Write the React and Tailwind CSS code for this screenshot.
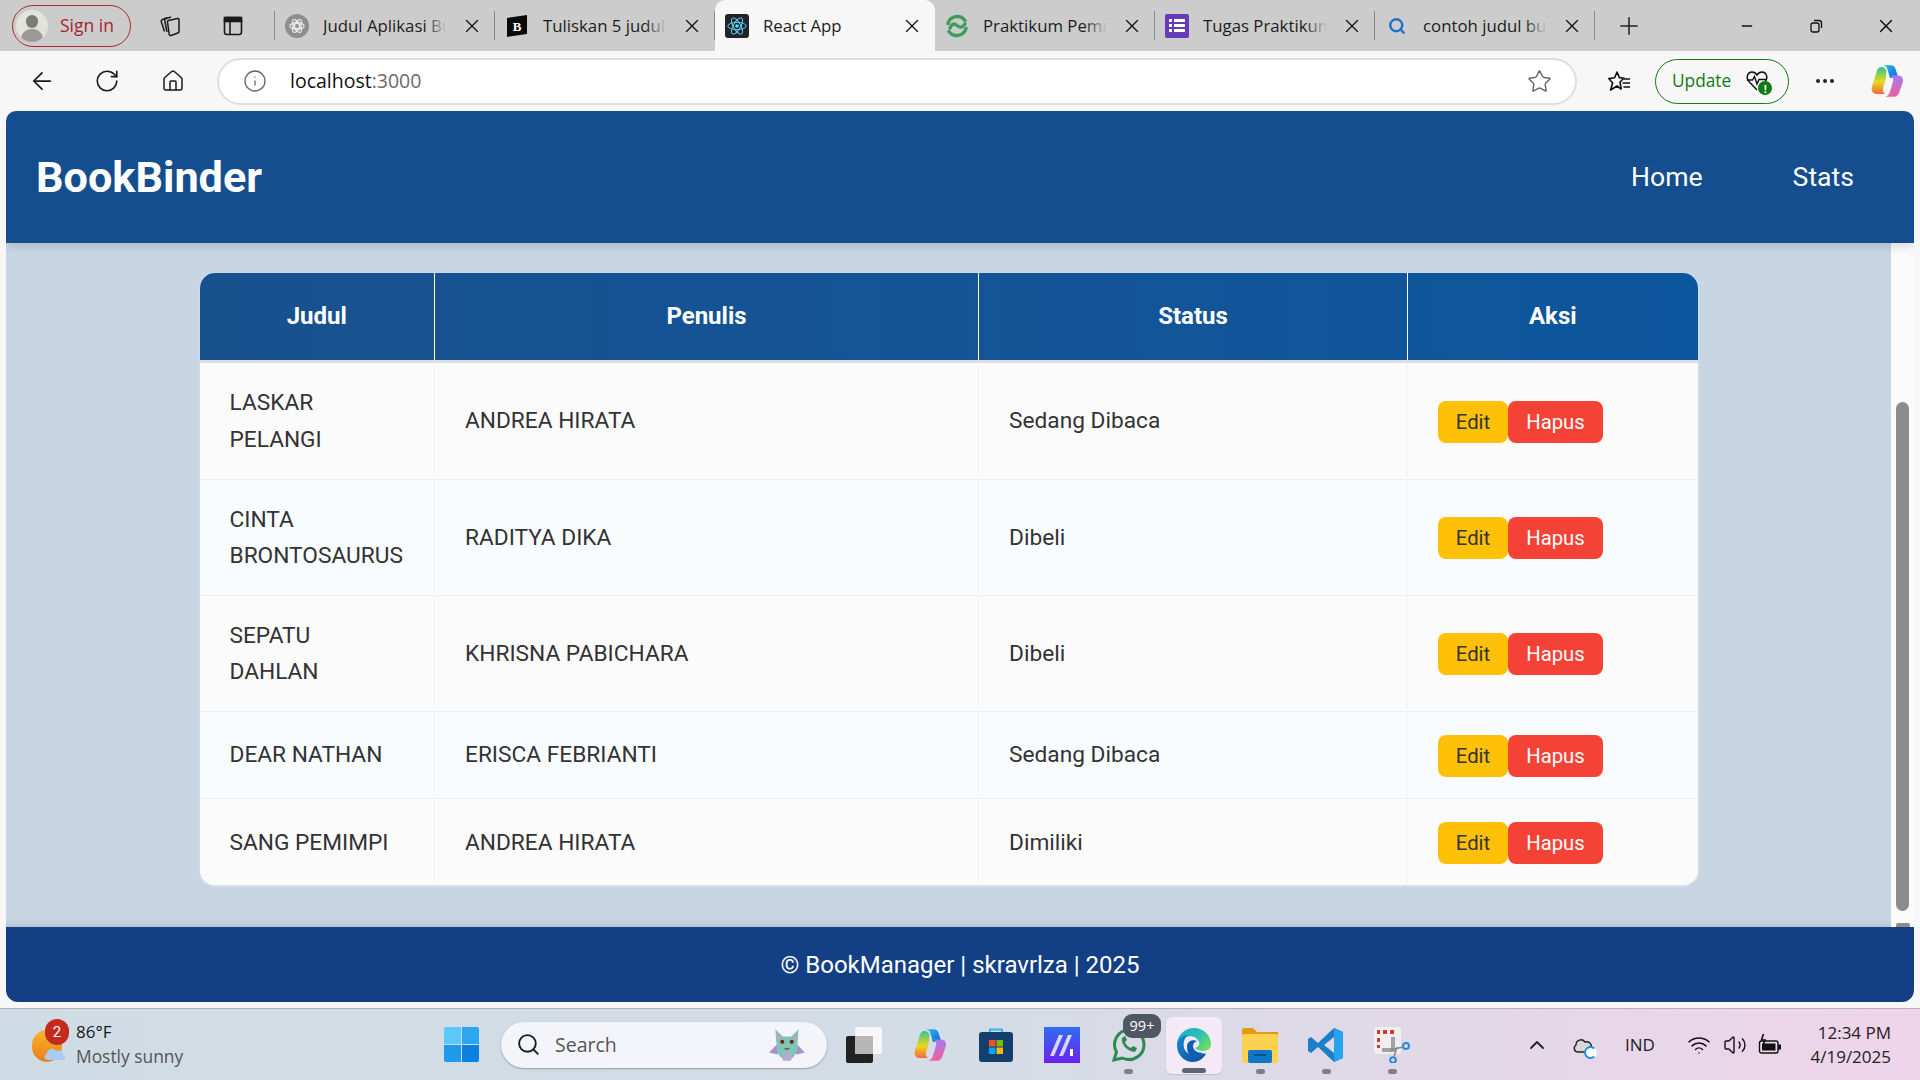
import React from 'react';
import { ArrowLeft, RotateCw, Home, Info, Star, X, Plus, Minus, Search, ChevronUp, Wifi, Volume2, MoreHorizontal } from 'lucide-react';

const books = [
  { judul: 'LASKAR PELANGI', penulis: 'ANDREA HIRATA', status: 'Sedang Dibaca', rowCls: 'h-[118px]' },
  { judul: 'CINTA BRONTOSAURUS', penulis: 'RADITYA DIKA', status: 'Dibeli', rowCls: 'h-[116px]' },
  { judul: 'SEPATU DAHLAN', penulis: 'KHRISNA PABICHARA', status: 'Dibeli', rowCls: 'h-[116px]' },
  { judul: 'DEAR NATHAN', penulis: 'ERISCA FEBRIANTI', status: 'Sedang Dibaca', rowCls: 'h-[87px]' },
  { judul: 'SANG PEMIMPI', penulis: 'ANDREA HIRATA', status: 'Dimiliki', rowCls: 'h-[87px]' },
];

const ReactIcon = () => (
  <div className="w-6 h-6 rounded-[3px] bg-[#20232a] flex items-center justify-center">
    <svg viewBox="-12 -12 24 24" className="w-[22px] h-[22px]" fill="none" stroke="#61dafb" strokeWidth="1">
      <ellipse rx="10" ry="4" />
      <ellipse rx="10" ry="4" transform="rotate(60)" />
      <ellipse rx="10" ry="4" transform="rotate(120)" />
      <circle r="2" fill="#61dafb" stroke="none" />
    </svg>
  </div>
);

const GptIcon = () => (
  <div className="w-6 h-6 rounded-full bg-[#8e8e8e] flex items-center justify-center">
    <svg viewBox="0 0 24 24" className="w-[18px] h-[18px]" fill="none" stroke="#e8e8e8" strokeWidth="1.6">
      <circle cx="12" cy="12" r="3.5" />
      <ellipse cx="12" cy="12" rx="9.5" ry="4.5" />
      <ellipse cx="12" cy="12" rx="9.5" ry="4.5" transform="rotate(60 12 12)" />
      <ellipse cx="12" cy="12" rx="9.5" ry="4.5" transform="rotate(120 12 12)" />
    </svg>
  </div>
);

const BoldIcon = () => (
  <svg viewBox="0 0 24 24" className="w-6 h-6">
    <path d="M2 4 L22 1 V20 L2 23 Z" fill="#0a0a0a" />
    <text x="12" y="17" textAnchor="middle" fontSize="13" fontWeight="800" fill="#fff" fontFamily="Liberation Serif, serif">B</text>
  </svg>
);

const SpinIcon = () => (
  <svg viewBox="0 0 24 24" className="w-6 h-6" fill="none" stroke="#3f9c5c" strokeWidth="3.4" strokeLinecap="round">
    <path d="M3 9.5 A9.6 9.6 0 0 1 20 6.5" />
    <path d="M21 14.5 A9.6 9.6 0 0 1 4 17.5" />
    <path d="M5 14 C7 9.5 9 9 12 11.5 C15 14 17 14 20 10" />
  </svg>
);

const FormsIcon = () => (
  <div className="w-6 h-6 rounded-[2px] bg-[#673ab7] flex flex-col justify-center gap-[2px] pl-[4px]">
    {[0, 1, 2].map((i) => (
      <div key={i} className="flex gap-[2px]">
        <div className="h-[3px] w-[3px] bg-white" />
        <div className="h-[3px] w-[11px] bg-white" />
      </div>
    ))}
  </div>
);

const GoogleSearchIcon = () => <Search className="w-[18px] h-[18px] text-[#1a73c8] ml-[3px]" strokeWidth={3.2} />;

const CopilotIcon = ({ className, id }) => (
  <svg viewBox="0 0 32 32" className={className}>
    <defs>
      <linearGradient id={`${id}A`} x1="0" y1="0" x2="1" y2="1">
        <stop offset="0" stopColor="#22c3e6" />
        <stop offset="1" stopColor="#1b5fe0" />
      </linearGradient>
      <linearGradient id={`${id}B`} x1="0.5" y1="0" x2="0.5" y2="1">
        <stop offset="0" stopColor="#2fc48f" />
        <stop offset="0.55" stopColor="#e9d91c" />
        <stop offset="1" stopColor="#f4683c" />
      </linearGradient>
      <linearGradient id={`${id}C`} x1="0.5" y1="0" x2="0.5" y2="1">
        <stop offset="0" stopColor="#a57af0" />
        <stop offset="1" stopColor="#f05f9c" />
      </linearGradient>
    </defs>
    <path d="M12 2 H19.5 C21.5 2 23 3.2 23.7 5.5 L26 13 H18.5 L16.4 5.5 C15.9 3.5 14.5 2.3 12 2 Z" fill={`url(#${id}A)`} />
    <path d="M11 3.5 C9 3.5 7.6 5 7 7 L2.6 21 C1.6 24.5 3.5 27.5 7 27.5 H14.5 C12.6 26.6 12 24.5 12.6 22 L15 13.5 L15.5 7 C15 5 13.5 3.5 11 3.5 Z" fill={`url(#${id}B)`} />
    <path d="M19 11 H26 C29 11 31 13.5 30 17 L27 26 C26.2 28.6 24.5 30 22 30 H13.5 C16 30 17.6 28.6 18.5 26 L21.5 16 C22 14 21 11.5 19 11 Z" fill={`url(#${id}C)`} />
  </svg>
);

const CollectionsIcon = () => (
  <svg viewBox="0 0 24 24" className="w-6 h-6" fill="none" stroke="#1a1a1a" strokeWidth="1.5" strokeLinejoin="round">
    <path d="M10.5 6.5 L19.5 4.5 C20.5 4.3 21 4.8 21 5.7 V17.5 C21 18.3 20.6 18.8 19.8 19 L13 21.5 C12 21.8 11.5 21.3 11.2 20.4 L9.5 8 C9.4 7.2 9.8 6.7 10.5 6.5 Z" />
    <path d="M13 3 L7.6 4.8 C6.8 5.1 6.5 5.7 6.7 6.5 L9 18" />
    <path d="M9 3.6 L4 5.8 C3.2 6.2 3 6.8 3.2 7.6 L6.5 17.5" />
  </svg>
);

const TabActionsIcon = () => (
  <svg viewBox="0 0 24 24" className="w-6 h-6" fill="none" stroke="#1a1a1a" strokeWidth="1.6">
    <rect x="3.5" y="3.5" width="17" height="17" rx="2.5" />
    <rect x="3.5" y="3.5" width="17" height="4" fill="#1a1a1a" />
    <path d="M9 7.5 V20.5" />
  </svg>
);

const Avatar = () => (
  <div className="relative w-8 h-8 rounded-full bg-[#e4e2dd] overflow-hidden shrink-0">
    <div className="absolute left-[10px] top-[5px] w-3 h-[13px] rounded-full bg-[#7b7b78]" />
    <div className="absolute left-[5px] top-[19px] w-[22px] h-5 rounded-full bg-[#9c9a96]" />
  </div>
);

const FavoritesIcon = () => (
  <svg viewBox="0 0 24 24" className="w-6 h-6" fill="none" stroke="#111" strokeWidth="1.6" strokeLinejoin="round">
    <path d="M10 3 L12.4 8.6 L17 9.2 L13 13 L14.2 20 L10 17 L3.6 21 L5.6 14 L1.8 9.6 L7.6 8.8 Z" />
    <path d="M17 10 H23 M15.5 14 H23 M16.5 18 H23" />
  </svg>
);

const HeartIcon = () => (
  <div className="relative w-[26px] h-6">
    <svg viewBox="0 0 24 24" className="w-6 h-6" fill="none" stroke="#111" strokeWidth="1.4">
      <path d="M12 21 L3.5 12 C0.5 8 3 3 7 3 C9.5 3 11 4.5 12 6 C13 4.5 14.5 3 17 3 C21 3 23.5 8 20.5 12 L18 15" />
      <path d="M2 11 H7.5 L9.5 7.5 L12 15 L14 10.5 H22" />
    </svg>
    <div className="absolute -right-[1px] -bottom-[2px] w-[14px] h-[14px] rounded-full bg-[#107c10] flex items-center justify-center text-white text-[11px] leading-none font-bold">!</div>
  </div>
);

const RestoreIcon = () => (
  <svg viewBox="0 0 16 16" className="w-4 h-4" fill="none" stroke="#111" strokeWidth="1.3">
    <rect x="3" y="5" width="8" height="9" rx="2" />
    <path d="M6 2.5 H11 C12.5 2.5 13.5 3.5 13.5 5 V10" />
  </svg>
);

const WindowsIcon = () => (
  <div className="grid grid-cols-2 gap-[1px] w-[35px] h-[35px] shrink-0">
    <div className="bg-[#5cc8f8] rounded-tl-[2px]" />
    <div className="bg-[#2ba7ee] rounded-tr-[2px]" />
    <div className="bg-[#1f99ea] rounded-bl-[2px]" />
    <div className="bg-[#0a80e0] rounded-br-[2px]" />
  </div>
);

const BatMascot = () => (
  <svg viewBox="0 0 36 36" className="w-[38px] h-[38px]">
    <path d="M8 18 L1 25 L9 27 L11 23 Z M28 18 L35 25 L27 27 L25 23 Z" fill="#a98fd4" />
    <path d="M7 3 L14 10 H22 L29 3 L28 17 C28 26 24 32 18 32 C12 32 8 26 8 17 Z" fill="#7fc6b8" />
    <path d="M9 6 L13 11 L10 14 Z M27 6 L23 11 L26 14 Z" fill="#d99aa0" />
    <circle cx="13.5" cy="15" r="2" fill="#6b2d18" />
    <circle cx="22.5" cy="15" r="2" fill="#6b2d18" />
    <path d="M15 21 Q18 24 21 21 Z" fill="#8b3a2a" />
    <path d="M14 26 H22 V33 H14 Z" fill="#b9a7d8" />
  </svg>
);

const TaskViewIcon = () => (
  <div className="relative w-9 h-9">
    <div className="absolute right-0 top-0 w-[27px] h-[27px] rounded-[2px] bg-[#f7f7f7]" />
    <div className="absolute left-0 bottom-0 w-[27px] h-[27px] rounded-[2px] bg-[#222]" />
    <div className="absolute left-[9px] top-[9px] w-[18px] h-[18px] bg-[#b7b7b7]" />
  </div>
);

const StoreIcon = () => (
  <svg viewBox="0 0 36 36" className="w-9 h-9">
    <path d="M12 6 V2.5 H24 V6" fill="none" stroke="#30b8e8" strokeWidth="2" />
    <rect x="1" y="5" width="34" height="30" rx="3" fill="#143e6e" />
    <rect x="11" y="13" width="6.5" height="6.5" fill="#f25022" />
    <rect x="18.5" y="13" width="6.5" height="6.5" fill="#7fba00" />
    <rect x="11" y="20.5" width="6.5" height="6.5" fill="#00a4ef" />
    <rect x="18.5" y="20.5" width="6.5" height="6.5" fill="#ffb900" />
  </svg>
);

const ManusIcon = () => (
  <svg viewBox="0 0 36 36" className="w-9 h-9">
    <defs>
      <linearGradient id="mnA" x1="0" y1="0" x2="0" y2="1">
        <stop offset="0" stopColor="#2f6df0" />
        <stop offset="1" stopColor="#6a22f0" />
      </linearGradient>
    </defs>
    <rect width="36" height="36" fill="url(#mnA)" />
    <path d="M6 29 L15 8 H19 L10 29 Z M15 29 L24 8 H28 L19 29 Z" fill="#d9d4fb" />
    <path d="M26 22 H29 V29 H26 Z" fill="#fff" />
  </svg>
);

const WhatsAppIcon = () => (
  <svg viewBox="0 0 36 36" className="w-9 h-9" fill="none" stroke="#2b8a4e" strokeWidth="3">
    <path d="M4 33 L6.5 25 C1 15 8 3 19 3 C28 3 34 10 34 18 C34 28 23 36 12 31 Z" />
    <path d="M12 11 C11 18 17 24 25 25 L27 21 L23 19 L21 21 C18 20 16 18 15 15 L17 13 L15 9 Z" fill="#2b8a4e" stroke="none" />
  </svg>
);

const EdgeIcon = () => (
  <svg viewBox="0 0 36 36" className="w-9 h-9">
    <defs>
      <linearGradient id="edA" x1="0" y1="0" x2="1" y2="0.7">
        <stop offset="0" stopColor="#1aa6d8" />
        <stop offset="0.6" stopColor="#2cc2b0" />
        <stop offset="1" stopColor="#6fdc5c" />
      </linearGradient>
      <linearGradient id="edB" x1="0" y1="0" x2="1" y2="1">
        <stop offset="0" stopColor="#1b86d8" />
        <stop offset="1" stopColor="#0d4d9c" />
      </linearGradient>
    </defs>
    <path d="M1 18 C1 8 9 1 18 1 C28 1 35 9 35 17 C35 22 31 24 27 24 C23 24 20 23 19 21 C22 20 24 18 23 15 C21 10 15 8 10 10 C5 12 1 15 1 18 Z" fill="url(#edA)" />
    <path d="M1 18 C1 12 7 8 13 8 C8 10 7 16 8 21 C10 28 20 30 24 28 C27 27 28 26 30 27 C27 32 22 35 17 35 C8 35 1 28 1 18 Z" fill="url(#edB)" />
    <path d="M11 20 C11 14 16 12 21 14 C19 15 17 16 17 19 C17 23 21 26 27 26 C24 30 18 31 15 29 C12 27 11 24 11 20 Z" fill="#0c5fb2" />
  </svg>
);

const FolderIcon = () => (
  <svg viewBox="0 0 36 36" className="w-9 h-9">
    <path d="M0 3 C0 2 1 1 2 1 H11 L15 5 H36 V12 H0 Z" fill="#e09b14" />
    <rect y="7" width="36" height="29" rx="2" fill="#fbd24f" />
    <rect x="6" y="23" width="24" height="13" rx="2" fill="#0f78c8" />
    <rect x="12" y="27" width="12" height="2" fill="#0a4f8c" />
  </svg>
);

const VSCodeIcon = () => (
  <svg viewBox="0 0 36 36" className="w-9 h-9">
    <path d="M26 1 L35 5 V31 L26 35 L10 20 L3 26 L0 24 V12 L3 10 L10 16 Z M26 10 L16 18 L26 26 Z" fill="#1a7fc8" fillRule="evenodd" />
    <path d="M26 1 L35 5 V31 L26 35 Z" fill="#28a4ee" />
  </svg>
);

const SnipIcon = () => (
  <svg viewBox="0 0 36 36" className="w-9 h-9">
    <rect x="0" y="0" width="27" height="27" rx="3" fill="#efefef" />
    <path d="M3 3 H6 V7 H3 Z M9 3 H13 V7 H9 Z M16 3 H20 V7 H16 Z M3 11 H6 V15 H3 Z M3 18 H6 V21 H3 Z" fill="#d6382b" />
    <path d="M19 10 V23 H8" fill="none" stroke="#a3a3a3" strokeWidth="4" />
    <circle cx="32" cy="19" r="3" fill="none" stroke="#1f8ee0" strokeWidth="2" />
    <circle cx="19" cy="33" r="2.8" fill="none" stroke="#1f8ee0" strokeWidth="2" />
    <path d="M16 23 L29 20 M23 20 L20 30" stroke="#888" strokeWidth="1.6" />
  </svg>
);

const CloudSyncIcon = () => (
  <div className="relative w-6 h-6">
    <svg viewBox="0 0 24 24" className="w-6 h-6" fill="#d8d8d8" stroke="#222" strokeWidth="1.4">
      <path d="M6 19 C2 19 1 14 4 12 C4 7 10 5 13 9 C17 8 20 11 19 14 C21 15 21 19 18 19 Z" />
    </svg>
    <div className="absolute -right-[1px] -bottom-[2px] w-[13px] h-[13px] rounded-full bg-white border-[2px] border-[#1f8ee0] border-r-white" />
  </div>
);

const BatteryIcon = () => (
  <svg viewBox="0 0 24 24" className="w-6 h-6" fill="none" stroke="#111" strokeWidth="1.4">
    <rect x="1.5" y="8" width="18.5" height="12" rx="2" />
    <rect x="4" y="10.5" width="13.5" height="7" fill="#111" stroke="none" />
    <rect x="20" y="11.5" width="3" height="5" fill="#111" stroke="none" />
    <path d="M5.5 1 L3.5 7 H7 L5.5 11" strokeWidth="1.6" />
  </svg>
);

const WeatherIcon = () => (
  <div className="relative w-[32px] h-[32px]">
    <div className="absolute left-0 top-0 w-[30px] h-[32px] rounded-full bg-gradient-to-b from-[#f6b52a] to-[#ee7b1e]" />
    <svg viewBox="0 0 24 16" className="absolute left-[11px] top-[15px] w-[24px] h-[16px]" fill="#a9cdf2">
      <path d="M5 15 C1 15 0 10 4 9 C4 4 11 2 13 6 C17 4 21 7 20 10 C23 11 23 15 20 15 Z" />
    </svg>
    <div className="absolute left-[13px] -top-[11px] w-[24px] h-[26px] rounded-full bg-[#c42b1c] text-white text-[15px] leading-[26px] text-center font-['Roboto',sans-serif]">2</div>
  </div>
);

const Tab = ({ icon, title, active, last }) => (
  <div className={`relative w-[220px] h-full flex items-center shrink-0 ${active ? 'bg-[#f7f7f7] rounded-t-[10px]' : ''}`}>
    <div className="w-[48px] pl-[10px] shrink-0">{icon}</div>
    <div className="relative w-[136px] overflow-hidden whitespace-nowrap text-[16.8px] text-[#1c1c1c] shrink-0">
      {title}
      {!active && <div className="absolute right-0 top-0 bottom-0 w-[34px] bg-gradient-to-r from-transparent to-[#cccccc] to-65%" />}
    </div>
    <X className="w-[22px] h-[22px] ml-[2px] text-[#111] shrink-0" strokeWidth={1.4} />
    {!active && !last && <div className="absolute right-0 top-[11px] h-[29px] w-px bg-[#8a8a8a]" />}
  </div>
);

const TaskSlot = ({ children, dot, active }) => (
  <div className="relative w-[66px] h-[72px] flex items-center justify-center shrink-0">
    {active && <div className="absolute left-[5px] top-[8px] w-[56px] h-[57px] rounded-[6px] bg-[#f4e9f6] shadow-[0_1px_1px_rgba(0,0,0,0.12)]" />}
    <div className="relative">{children}</div>
    {dot && <div className="absolute left-[29px] top-[60px] w-[9px] h-[5px] rounded-full bg-[#7e7e84]" />}
    {active && <div className="absolute left-[21px] top-[59px] w-[24px] h-[5px] rounded-full bg-[#5d6570]" />}
  </div>
);

function App() {
  const thCls = 'border-l border-white first:border-l-0 text-center text-white font-bold text-[24px] h-[88px] p-0';
  const tdCls = 'border-l border-[#f4f4f4] first:border-l-0 px-[30px] text-left align-middle text-[22.7px] leading-[36.5px] text-[#333] pt-[2px] pb-0';

  return (
    <div className="w-[1920px] h-[1080px] overflow-hidden flex flex-col bg-[#f7f7f7] font-['Roboto',sans-serif]">
      {/* browser tabs */}
      <div className="h-[51px] bg-[#cccccc] flex items-center font-['Open_Sans',sans-serif] shrink-0">
        <div className="ml-[12px] w-[119px] h-[42px] rounded-full border-[1.5px] border-[#b02a30] flex items-center gap-[12px] pl-[3px] shrink-0">
          <Avatar />
          <span className="text-[17.5px] text-[#a4262c]">Sign in</span>
        </div>
        <div className="ml-[27px] shrink-0"><CollectionsIcon /></div>
        <div className="ml-[39px] shrink-0"><TabActionsIcon /></div>
        <div className="ml-[29px] h-[29px] w-px bg-[#8a8a8a] shrink-0" />
        <div className="flex h-[51px]">
          <Tab icon={<GptIcon />} title="Judul Aplikasi Bu" />
          <Tab icon={<BoldIcon />} title="Tuliskan 5 judul" />
          <Tab icon={<ReactIcon />} title="React App" active />
          <Tab icon={<SpinIcon />} title="Praktikum Pemr" />
          <Tab icon={<FormsIcon />} title="Tugas Praktikum" />
          <Tab icon={<GoogleSearchIcon />} title="contoh judul bu" />
        </div>
        <Plus className="ml-[20px] w-7 h-7 text-[#222] shrink-0" strokeWidth={1.3} />
        <Minus className="ml-[96px] w-4 h-4 text-[#111] shrink-0" strokeWidth={2} />
        <div className="ml-[53px] shrink-0"><RestoreIcon /></div>
        <X className="ml-[51px] w-[22px] h-[22px] text-[#111] shrink-0" strokeWidth={1.6} />
      </div>

      {/* toolbar */}
      <div className="h-[60px] flex items-center bg-[#f7f7f7] font-['Open_Sans',sans-serif] shrink-0">
        <ArrowLeft className="ml-[28px] w-7 h-7 text-[#1a1a1a] shrink-0" strokeWidth={1.5} />
        <RotateCw className="ml-[38px] w-[26px] h-[26px] text-[#1a1a1a] shrink-0" strokeWidth={1.5} />
        <Home className="ml-[41px] w-[24px] h-[24px] text-[#1a1a1a] shrink-0" strokeWidth={1.5} />
        <div className="ml-[32px] w-[1360px] h-[47px] rounded-full bg-white border-2 border-[#dedede] flex items-center shrink-0">
          <Info className="ml-[24px] w-[24px] h-[24px] text-[#666]" strokeWidth={1.3} />
          <span className="ml-[23px] text-[19.5px] text-[#111]">localhost<span className="text-[#6b6b6b]">:3000</span></span>
          <Star className="ml-auto mr-[23px] w-[25px] h-[25px] text-[#666]" strokeWidth={1.4} />
        </div>
        <div className="ml-[30px] shrink-0"><FavoritesIcon /></div>
        <div className="ml-[24px] w-[134px] h-[45px] rounded-full border-[1.5px] border-[#107c10] flex items-center pl-[16px] gap-[14px] shrink-0">
          <span className="text-[17.3px] text-[#107c10]">Update</span>
          <HeartIcon />
        </div>
        <MoreHorizontal className="ml-[24px] w-6 h-6 text-[#222] shrink-0" strokeWidth={2} />
        <CopilotIcon id="cpTop" className="ml-[32px] w-[36px] h-[36px] shrink-0" />
      </div>

      {/* page */}
      <div className="flex-1 min-h-0 mx-[6px] flex flex-col overflow-hidden">
        <header className="relative z-10 h-[132px] shrink-0 bg-[#144e8f] rounded-t-[10px] flex items-center px-[30px] text-white shadow-[0_4px_10px_rgba(0,0,0,0.12)]">
          <h1 className="text-[43.2px] font-bold pt-[2px]">BookBinder</h1>
          <nav className="ml-auto flex gap-[90px] pr-[30px] text-[26.6px]">
            <a>Home</a>
            <a>Stats</a>
          </nav>
        </header>

        <div className="flex-1 min-h-0 flex">
          <main className="flex-1 min-w-0 bg-[#c8d5e3] pt-[30px] shadow-[inset_0_-8px_8px_-8px_rgba(0,0,0,0.18)]">
            <div className="mx-auto w-[1498px] rounded-[15px] overflow-hidden bg-white shadow-[0_1px_3px_rgba(255,255,255,0.5)]">
              <table className="w-full table-fixed border-collapse">
                <colgroup>
                  <col className="w-[235px]" />
                  <col className="w-[544px]" />
                  <col className="w-[429px]" />
                  <col className="w-[290px]" />
                </colgroup>
                <thead>
                  <tr className="bg-gradient-to-r from-[#19518f] to-[#0c569d] border-b-[3px] border-[#dfdfdf]">
                    <th className={thCls}>Judul</th>
                    <th className={thCls}>Penulis</th>
                    <th className={thCls}>Status</th>
                    <th className={thCls}>Aksi</th>
                  </tr>
                </thead>
                <tbody>
                  {books.map((b, i) => (
                    <tr key={b.judul} className={`border-b border-[#eeeeee] last:border-b-0 ${b.rowCls} ${i % 2 ? 'bg-[#f8fcff]' : 'bg-[#fbfbfb]'}`}>
                      <td className={tdCls}>{b.judul}</td>
                      <td className={tdCls}>{b.penulis}</td>
                      <td className={tdCls}>{b.status}</td>
                      <td className={tdCls}>
                        <div className="flex">
                          <button className="w-[70px] h-[42px] rounded-[8px] bg-[#ffc107] text-[#333] text-[20.3px] leading-none pt-[1px]">Edit</button>
                          <button className="w-[95px] h-[42px] rounded-[8px] bg-[#f44336] text-white text-[20.3px] leading-none pt-[1px]">Hapus</button>
                        </div>
                      </td>
                    </tr>
                  ))}
                </tbody>
              </table>
            </div>
          </main>
          {/* scrollbar */}
          <div className="w-[23px] shrink-0 bg-[#fbfbfb] flex flex-col items-center pt-[159px]">
            <div className="w-[13px] h-[509px] rounded-full bg-[#8c8c8c]" />
            <div className="mt-[12px] w-[14px] h-[4px] rounded-t-[2px] bg-[#8c8c8c]" />
          </div>
        </div>

        <footer className="h-[75px] shrink-0 bg-[#133f85] rounded-b-[12px] flex items-center justify-center text-white text-[24px] pt-[1px]">
          © BookManager | skravrlza | 2025
        </footer>
      </div>
      <div className="h-[6px] shrink-0" />

      {/* windows taskbar */}
      <div className="h-[72px] shrink-0 flex items-center bg-gradient-to-r from-[#d0dce5] via-[#d4dce6] to-[#efd4ea] border-t border-[#b4b0b8] font-['Open_Sans',sans-serif]">
        <div className="ml-[32px] mt-[2px] shrink-0"><WeatherIcon /></div>
        <div className="ml-[12px] w-[110px] shrink-0 flex flex-col gap-[2px] -mt-[1px]">
          <span className="text-[17px] leading-[22px] text-[#1a1a1a]">86°F</span>
          <span className="text-[17.4px] leading-[22px] text-[#555] whitespace-nowrap">Mostly sunny</span>
        </div>
        <div className="ml-[258px] shrink-0"><WindowsIcon /></div>
        <div className="ml-[22px] w-[326px] h-[46px] rounded-full bg-[#f4f5fa] shadow-[0_1px_2px_rgba(0,0,0,0.3)] flex items-center pl-[15px] shrink-0">
          <Search className="w-[25px] h-[25px] text-[#1a1a1a]" strokeWidth={1.8} />
          <span className="ml-[14px] text-[19.5px] text-[#555]">Search</span>
          <div className="ml-auto mr-[21px]"><BatMascot /></div>
        </div>
        <div className="ml-[4px] flex shrink-0">
          <TaskSlot><TaskViewIcon /></TaskSlot>
          <TaskSlot><CopilotIcon id="cpBar" className="w-9 h-9" /></TaskSlot>
          <TaskSlot><StoreIcon /></TaskSlot>
          <TaskSlot><ManusIcon /></TaskSlot>
          <TaskSlot dot>
            <WhatsAppIcon />
            <div className="absolute left-[13px] -top-[13px] w-[38px] h-[24px] rounded-[9px] bg-[#4f5862] text-white text-[14.5px] leading-[24px] text-center">99+</div>
          </TaskSlot>
          <TaskSlot active><EdgeIcon /></TaskSlot>
          <TaskSlot dot><FolderIcon /></TaskSlot>
          <TaskSlot dot><VSCodeIcon /></TaskSlot>
          <TaskSlot dot><SnipIcon /></TaskSlot>
        </div>
        <ChevronUp className="ml-[100px] w-6 h-6 text-[#222] shrink-0" strokeWidth={1.8} />
        <div className="ml-[23px] shrink-0"><CloudSyncIcon /></div>
        <span className="ml-[29px] text-[17px] text-[#222] shrink-0">IND</span>
        <Wifi className="ml-[32px] w-6 h-6 text-[#111] shrink-0" strokeWidth={1.5} />
        <Volume2 className="ml-[12px] w-6 h-6 text-[#111] shrink-0" strokeWidth={1.4} />
        <div className="ml-[11px] shrink-0"><BatteryIcon /></div>
        <div className="ml-auto mr-[29px] text-right text-[17px] leading-[24px] text-[#222] shrink-0">
          <div>12:34 PM</div>
          <div>4/19/2025</div>
        </div>
      </div>
    </div>
  );
}

export default App;
